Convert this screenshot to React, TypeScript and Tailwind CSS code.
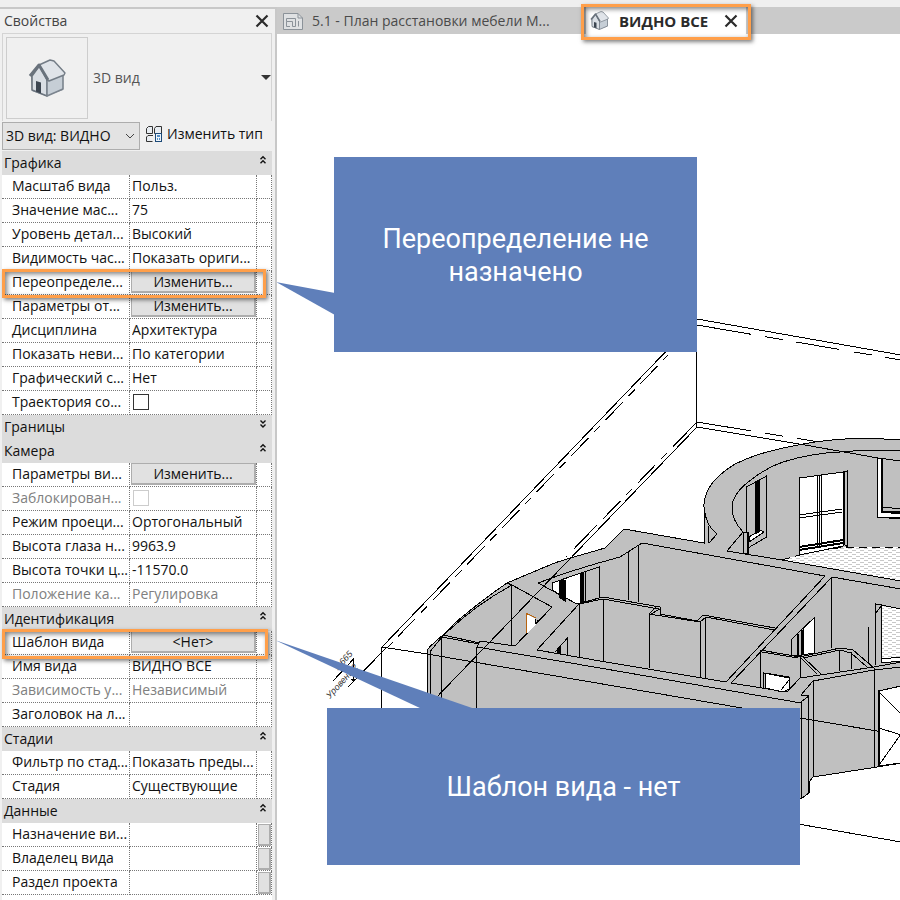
import React from "react";

type Kind = "text" | "button" | "check" | "assoc";

interface Row {
  label: string;
  value?: string;
  kind?: Kind;
  disabled?: boolean;
  frame?: string;
}

interface Group {
  title: string;
  open: boolean;
  rows: Row[];
}

const groups: Group[] = [
  {
    title: "Графика",
    open: true,
    rows: [
      { label: "Масштаб вида", value: "Польз." },
      { label: "Значение мас...", value: "75" },
      { label: "Уровень детал...", value: "Высокий" },
      { label: "Видимость час...", value: "Показать ориги..." },
      { label: "Переопределе...", value: "Изменить...", kind: "button", frame: "w-[264px] h-[29px]" },
      { label: "Параметры от...", value: "Изменить...", kind: "button" },
      { label: "Дисциплина", value: "Архитектура" },
      { label: "Показать неви...", value: "По категории" },
      { label: "Графический с...", value: "Нет" },
      { label: "Траектория со...", kind: "check" },
    ],
  },
  { title: "Границы", open: false, rows: [] },
  {
    title: "Камера",
    open: true,
    rows: [
      { label: "Параметры ви...", value: "Изменить...", kind: "button" },
      { label: "Заблокирован...", kind: "check", disabled: true },
      { label: "Режим проеци...", value: "Ортогональный" },
      { label: "Высота глаза н...", value: "9963.9" },
      { label: "Высота точки ц...", value: "-11570.0" },
      { label: "Положение ка...", value: "Регулировка", disabled: true },
    ],
  },
  {
    title: "Идентификация",
    open: true,
    rows: [
      { label: "Шаблон вида", value: "<Нет>", kind: "button", frame: "w-[266px] h-[30px]" },
      { label: "Имя вида", value: "ВИДНО ВСЕ" },
      { label: "Зависимость у...", value: "Независимый", disabled: true },
      { label: "Заголовок на л...", value: "" },
    ],
  },
  {
    title: "Стадии",
    open: true,
    rows: [
      { label: "Фильтр по стад...", value: "Показать преды..." },
      { label: "Стадия", value: "Существующие" },
    ],
  },
  {
    title: "Данные",
    open: true,
    rows: [
      { label: "Назначение ви...", kind: "assoc" },
      { label: "Владелец вида", kind: "assoc" },
      { label: "Раздел проекта", kind: "assoc" },
    ],
  },
];

const frameStyle =
  "pointer-events-none absolute z-10 border-[3px] border-[#ff9f4a] shadow-[2px_2px_4px_rgba(0,0,0,0.5),inset_2px_2px_5px_rgba(0,0,0,0.5)]";

function House({ className }: { className: string }) {
  return (
    <svg className={className} viewBox="0 0 38 38" aria-hidden="true">
      <path d="M3 17 4 32 18 37 35 31 35 15 23 2z" fill="#8e959d" />
      <path d="M4 17 12 6 19 20 19 37 4 31z" fill="#d9dee4" stroke="#6b747e" strokeWidth="1.6" strokeLinejoin="round" />
      <path d="M19 20 35 14 35 30 19 37z" fill="#c6ced6" stroke="#7b848e" strokeWidth="1.6" strokeLinejoin="round" />
      <path d="M11 6 22 1 26 2 37 14 36 16 21 22 19 21z" fill="#e0e4e9" stroke="#737c86" strokeWidth="1.4" strokeLinejoin="round" />
      <path d="M2 17 11 6 20 21" fill="none" stroke="#69727c" strokeWidth="3" strokeLinejoin="round" />
      <path d="M8 22 13 23.500 13 34.500 8 32.500z" fill="#3d4651" />
    </svg>
  );
}

function Cross({ className }: { className: string }) {
  return (
    <svg className={className} viewBox="0 0 14 14" aria-hidden="true">
      <path d="M1.500 1.500 12.500 12.500M12.500 1.500 1.500 12.500" stroke="#2b2b2b" strokeWidth="2.200" />
    </svg>
  );
}

function Chevrons({ open }: { open: boolean }) {
  return (
    <svg className="h-[10px] w-[8px]" viewBox="0 0 8 10" fill="none" stroke="#111" strokeWidth="1.400" aria-hidden="true">
      {open ? <path d="M1.500 4.200 4 1.700 6.500 4.200M1.500 8.200 4 5.700 6.500 8.200" /> : <path d="M1.500 1.500 4 4 6.500 1.500M1.500 5.500 4 8 6.500 5.500" />}
    </svg>
  );
}

function PropertyRow({ row, id }: { row: Row; id: string }) {
  const tone = row.disabled ? "text-[#808080]" : "text-[#111]";
  return (
    <tr className={`h-6 bg-white ${tone}`}>
      <th scope="row" className="relative border-r border-b border-dotted border-[#777] p-0 pl-[10px] text-left font-normal">
        <label htmlFor={id} className="block h-[23px] leading-[21px] whitespace-nowrap">
          {row.label}
        </label>
        {row.frame && <span className={`${frameStyle} -top-[2px] left-0 ${row.frame}`} />}
      </th>
      <td className="border-r border-b border-dotted border-[#777] p-0 align-top">
        {row.kind === "button" ? (
          <button
            id={id}
            className="mx-px block h-[22px] w-[125px] border border-r-2 border-b-2 border-[#adadad] bg-[#e1e1e1] text-center leading-[19px]"
          >
            {row.value}
          </button>
        ) : row.kind === "check" ? (
          <input
            id={id}
            type="checkbox"
            disabled={row.disabled}
            className={`mt-[3px] ml-[3px] block size-4 appearance-none border bg-white ${row.disabled ? "border-[#ccc]" : "border-[#333]"}`}
          />
        ) : (
          <input
            id={id}
            type="text"
            defaultValue={row.value ?? ""}
            disabled={row.disabled}
            className="block h-[21px] w-full bg-transparent pl-[2px] leading-[21px] outline-none"
          />
        )}
      </td>
      <td className="border-r border-b border-dotted border-[#777] p-0">
        {row.kind === "assoc" && (
          <button aria-label="Связать параметр" className="mx-auto block h-[22px] w-[13px] border border-r-2 border-b-2 border-[#adadad] bg-[#e1e1e1]" />
        )}
      </td>
    </tr>
  );
}

function Properties() {
  return (
    <aside className="flex w-[277px] shrink-0 flex-col border-t-2 border-r-2 border-[#c8c8c8] bg-[#f0f0f0] pr-[3px] pl-[2px]">
      <div className="flex h-6 items-center justify-between pr-[3px] pl-[2px] text-[#444]">
        <h2>Свойства</h2>
        <button aria-label="Закрыть">
          <Cross className="size-[14px]" />
        </button>
      </div>
      <button className="flex h-[88px] items-center border border-b-0 border-[#d4d4d4] pl-[3px] text-[#555]">
        <span className="flex size-[82px] items-center justify-center border border-[#cdcdcd]">
          <House className="size-[38px]" />
        </span>
        <span className="flex-1 pl-[5px] text-left">3D вид</span>
        <svg className="h-[5px] w-[10px]" viewBox="0 0 10 5" aria-hidden="true">
          <path d="M0 0H10L5 5z" fill="#333" />
        </svg>
      </button>
      <div className="flex h-[30px] items-center">
        <div className="relative w-[138px]">
          <select aria-label="Вид" className="block h-7 w-full appearance-none border border-[#adadad] bg-[#e3e3e3] pl-[3px] text-[#111]">
            <option>3D вид: ВИДНО</option>
          </select>
          <svg className="pointer-events-none absolute top-[11px] right-[5px] h-[7px] w-[10px]" viewBox="0 0 10 7" aria-hidden="true">
            <path d="M1 1 5 5 9 1" fill="none" stroke="#444" />
          </svg>
        </div>
        <button className="flex items-center gap-[5px] pb-1 pl-[6px] text-[#111]">
          <svg className="size-4" viewBox="0 0 16 16" fill="none" stroke="#333" aria-hidden="true">
            <path d="M2.500 .500 0.500 2.500V7.500H6.500V.500zM10 .500 8.500 2.500V7.500H15.500V.500zM2 9.500H7M2 9.500 0.500 11V15.500H6.500" fill="#e8edf2" />
            <rect x="9.500" y="7.500" width="6" height="8" fill="#eef4fa" stroke="#1c4a78" />
            <path d="M11 10H14M11 13H12M13 13H14" stroke="#1f6db5" strokeWidth="1.500" />
          </svg>
          Изменить тип
        </button>
      </div>
      <table className="w-full table-fixed border-separate border-spacing-0">
        <colgroup>
          <col className="w-[128px]" />
          <col />
          <col className="w-[15px]" />
        </colgroup>
        {groups.map((group, g) => (
          <tbody key={group.title}>
            <tr className="h-6 bg-[#dcdcdc] text-[#111]">
              <th colSpan={3} className="p-0 font-normal">
                <button aria-expanded={group.open} className="flex h-6 w-full items-start justify-between pr-[5px] pl-[2px] leading-[23px]">
                  {group.title}
                  <span className="block pt-1">
                    <Chevrons open={group.open} />
                  </span>
                </button>
              </th>
            </tr>
            {group.rows.map((row, r) => (
              <PropertyRow key={row.label} row={row} id={`property-${g}-${r}`} />
            ))}
          </tbody>
        ))}
      </table>
      <div className="flex-1 bg-white" />
    </aside>
  );
}

function Model() {
  return (
    <svg
      className="absolute top-0 left-0"
      width="623"
      height="866"
      viewBox="277 34 623 866"
      fill="none"
      stroke="#000"
      shapeRendering="crispEdges"
      role="img"
      aria-label="3D вид здания"
    >
      <defs>
        <pattern id="tiles" width="8" height="4" patternUnits="userSpaceOnUse">
          <rect width="8" height="4" fill="#fff" stroke="none" />
          <path d="M0 .5H4M4 2.500H8" stroke="#c8c8c8" />
        </pattern>
      </defs>

      {/* building mass */}
      <path
        d="M427 720V650Q432 644 443 635Q453 624 467 613Q485 598 507 583L545 567Q556 562 567 559L605 548L624 529L704 543V507Q703 496 713 482Q722 472 735 464Q747 458 760 454Q780 448 803 444Q830 439 865 438Q885 439 902 440V763L877 767L813 777L809 782V793L802 798H798V720z"
        fill="#c0c0c0"
      />

      {/* section box */}
      <path d="M697 319 382 647M697 319 901 355M696.500 320V427M697 427 805 445 878 458 901 461M697 427 432 702M381.500 647V710M382 647 427 654 620 687 742 708 800 718 901 735M798 824 901 842" />
      <path d="M668 355 387 648" strokeDasharray="9 8 25 8" strokeDashoffset="2" />
      <path d="M697 325 901 360" strokeDasharray="55 14 18 14 43 15 18 14 44" />
      <path d="M697 422 819 442" strokeDasharray="55 14 18 14" />
      <path d="M697 422 566 557" strokeDasharray="34 9 9 8 25 8 9 8 25 8" />

      {/* left wing */}
      <path d="M430.500 710V651L442 637 447 632Q477 604 512 585L552 607 515 646 480 641 477 647M443 635 480 643M442 637 479 644M441.500 637V710M476.500 647V710M511.500 585V645M477 647 600 668 801 703" />
      <path d="M507 583 512 585M538 583 577 604 603 597 660 607M579 604 603 599 659 609M538 583Q575 569 620 557L642 543 825 576M628.500 551V600M638.500 545V602M579.500 604V657M603.500 599V661M579 604 537 650 600 661 726 682" />
      <path d="M552 583V590L577 604 599 598V567z" fill="#c0c0c0" />
      <path d="M552 583 581 573V603H575L552 590z" fill="#fff" />
      <path d="M559 580H565V601L559 597zM580 573H583V602H580z" fill="#000" />
      <path d="M585.500 572V602" />
      <path d="M526.500 614 536 619V624L526.500 634z" fill="#fff" stroke="none" />
      <path d="M526.500 633V613.500L536 618" stroke="#b8640f" />
      <path d="M535.500 619V624M538 620 536 624M555 652 567.500 638V655" />
      <path d="M557 651 560 648V653H557z" fill="#000" />

      {/* inner rooms */}
      <path d="M660 607V614L697 621 703 615 775 628M649 614 656 607M651 614 660 609M649 614 700 622 706 617 774 630M649.500 614V668M700.500 622V678M705.500 617V678M825 576 726 682M832 577 731 683M731 683 787 692" />
      <path d="M831.500 577V648M832 577 901 589M760 650 800 657 840 648 853 650 874 668M762 652 798 658M803 658 840 650 851 653 867 667M760.500 651V688M800.500 657V678M800 657 817 674M804 658 821 674M839.500 650V671M851.500 652V669" />
      <path d="M787 692 800 678 874 667 901 662M801 695 813 681 874 670 901 667M801 695 809 696 801 702V798M808.500 696V793M813.500 681V777M874.500 668V767" />
      <path d="M765 673 789 677V689L783 692 765 688z" fill="#fff" />
      <path d="M763.500 688V673L789 678M781 690 789 680" />
      <path d="M791 640 801 630 814 618V653L802 655 791 656z" fill="#c0c0c0" />
      <path d="M803 629 814 618V653L803 655z" fill="#fff" />
      <path d="M797.500 634V655M802 630V655" strokeWidth="2" />

      {/* round hall */}
      <path d="M704 508Q706 526 717 534L709 543M708.500 526V543M743 532Q732 520 732 508Q732 495 747 483Q765 468 783 462Q812 453 840 452Q870 449 901 451M743 532 727 551 782 560 901 581" />
      <path d="M782 560 799 555 820 550 847 547H901V581z" fill="url(#tiles)" stroke="none" />
      <path d="M727 551 782 560 901 581" />
      <path d="M782 560 799 555 820 550 847 547H901" strokeDasharray="8 5" />
      <path d="M746.500 532V487L766.500 476V537L748 548" />
      <path d="M749 537 760 530 764 532 749 542z" fill="#fff" />
      <path d="M755 482 759 480V532L755 534z" fill="#000" />
      <path d="M743.500 532H748.500V554L743.500 553z" fill="#c0c0c0" />
      <path d="M747.500 533V554" strokeWidth="2" />
      <path d="M799.500 478 843 472V546L799.500 555z" fill="#fff" />
      <path d="M843 472 847.500 471V547L843 543z" fill="#c0c0c0" />
      <path d="M844.500 472V544M817.500 476V546M819.500 475V546M821.500 475V545M799 515 842 509M799 518 842 512" />
      <path d="M799 547 843 540M799 550 843 543" strokeWidth="2" />
      <path d="M877.500 458H881V511H901V518L877.500 517z" fill="#fff" />
      <path d="M881.500 458V512M881 512 901 513" strokeWidth="2" />
      <path d="M883 507 901 509M877 517 901 519" />

      {/* right edge openings */}
      <path d="M881.500 605 901 609V658L881.500 660z" fill="url(#tiles)" />
      <path d="M881.500 659 901 657V661L881.500 663z" fill="#fff" />
      <path d="M868.500 627V663M875.500 665V604L882 605 875 614M881.500 605V663" />
      <path d="M878.500 691 901 686V763L878.500 766z" fill="#fff" />
      <path d="M878.500 691V766" strokeWidth="2" />
      <path d="M879 692 901 714M879 765 901 734M879 728 901 735" />

      {/* level mark */}
      <path d="M333 681 353.500 659V680M348 687 387 647" />
      <path d="M350 679H355L353 682z" fill="#000" stroke="none" />
      <g fill="#333" stroke="none" className="font-['Liberation_Sans',sans-serif] text-[9px] italic">
        <text transform="translate(330 699) rotate(-48)">Уровень 2</text>
        <text transform="translate(338 671) rotate(-48)">9.665</text>
      </g>

      {/* callout pointers */}
      <path d="M276 282 335 293V315z" fill="#5f7fba" stroke="none" shapeRendering="auto" />
      <path d="M275 640 475 709H422z" fill="#5f7fba" stroke="none" shapeRendering="auto" />
    </svg>
  );
}

function Workspace() {
  return (
    <main className="flex min-w-0 flex-1 flex-col">
      <nav className="flex h-[27px] items-center bg-[#cacaca] pl-[6px] text-[#4a4a4a]">
        <button className="flex w-[303px] items-center gap-[9px] whitespace-nowrap">
          <svg className="size-5" viewBox="0 0 20 20" fill="none" stroke="#8b9299" aria-hidden="true">
            <path d="M.500 2.500H15L19.500 7V18.500H.500z" fill="#dfe1e3" />
            <path d="M15 2.500V7H19.500M3.500 7.500H12.500V15.500H9.500V10.500H3.500zM3.500 10.500V15.500H7M15.500 10V15.500" />
          </svg>
          5.1 - План расстановки мебели М...
        </button>
        <div className="relative flex h-full w-[160px] items-center bg-white pr-[8px] pl-[4px] text-[#2b2b2b]">
          <button className="flex flex-1 items-center gap-[10px] text-[15px] font-bold whitespace-nowrap">
            <House className="size-[19px]" />
            ВИДНО ВСЕ
          </button>
          <button aria-label="Закрыть вкладку">
            <Cross className="size-[14px]" />
          </button>
          <span className={`${frameStyle} -top-[3px] -left-[5px] h-[36px] w-[170px]`} />
        </div>
      </nav>
      <div className="relative flex-1 overflow-hidden bg-white">
        <Model />
        <p className="absolute top-[123px] left-[57px] flex h-[195px] w-[363px] items-center justify-center bg-[#5f7fba] px-10 pt-[2px] text-center font-[Roboto,sans-serif] text-[27px] leading-[33px] text-white">
          Переопределение не назначено
        </p>
        <p className="absolute top-[674px] left-[50px] flex h-[157px] w-[473px] items-center justify-center bg-[#5f7fba] pt-[2px] text-center font-[Roboto,sans-serif] text-[27px] leading-[33px] text-white">
          Шаблон вида - нет
        </p>
      </div>
    </main>
  );
}

export default function App() {
  return (
    <div className="flex min-h-screen flex-col bg-[#efefef] font-['Open_Sans','Noto_Sans',sans-serif] text-[14px] leading-5">
      <div className="h-[7px]" />
      <div className="flex flex-1">
        <Properties />
        <Workspace />
      </div>
    </div>
  );
}
